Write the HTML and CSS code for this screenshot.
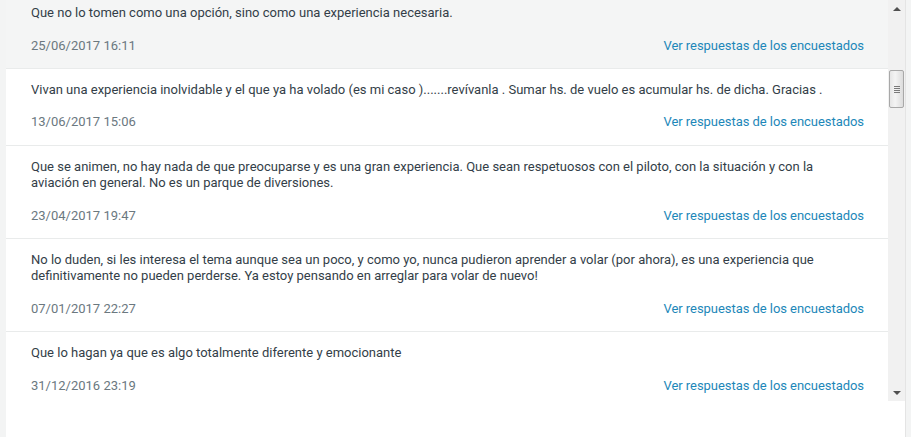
FILE: index.html
```html
<!DOCTYPE html>
<html lang="es">
<head>
<meta charset="UTF-8">
<title>Respuestas</title>
<link rel="stylesheet" href="styles.css">
</head>
<body>
<div class="page">
  <div class="gutter"></div>
  <div class="panel">
    <div class="viewport">
      <ul class="list">
        <li class="item item-hover">
          <p class="answer">Que no lo tomen como una opción, sino como una experiencia necesaria.</p>
          <div class="meta"><span class="date">25/06/2017 16:11</span><a class="link" href="#">Ver respuestas de los encuestados</a></div>
        </li>
        <li class="item">
          <p class="answer">Vivan una experiencia inolvidable y el que ya ha volado (es mi caso ).......revívanla . Sumar hs. de vuelo es acumular hs. de dicha. Gracias .</p>
          <div class="meta"><span class="date">13/06/2017 15:06</span><a class="link" href="#">Ver respuestas de los encuestados</a></div>
        </li>
        <li class="item">
          <p class="answer">Que se animen, no hay nada de que preocuparse y es una gran experiencia. Que sean respetuosos con el piloto, con la situación y con la aviación en general. No es un parque de diversiones.</p>
          <div class="meta"><span class="date">23/04/2017 19:47</span><a class="link" href="#">Ver respuestas de los encuestados</a></div>
        </li>
        <li class="item">
          <p class="answer">No lo duden, si les interesa el tema aunque sea un poco, y como yo, nunca pudieron aprender a volar (por ahora), es una experiencia que definitivamente no pueden perderse. Ya estoy pensando en arreglar para volar de nuevo!</p>
          <div class="meta"><span class="date">07/01/2017 22:27</span><a class="link" href="#">Ver respuestas de los encuestados</a></div>
        </li>
        <li class="item">
          <p class="answer">Que lo hagan ya que es algo totalmente diferente y emocionante</p>
          <div class="meta"><span class="date">31/12/2016 23:19</span><a class="link" href="#">Ver respuestas de los encuestados</a></div>
        </li>
      </ul>
      <div class="scrollbar">
        <span class="arrow arrow-up"></span>
        <div class="track">
          <div class="thumb"><span class="grip"></span></div>
        </div>
        <span class="arrow arrow-down"></span>
      </div>
    </div>
  </div>
  <div class="edge"></div>
</div>
</body>
</html>
```

FILE: styles.css
```css
body {
  margin: 0;
  background: #fff;
  font-family: Roboto, "Liberation Sans", sans-serif;
  font-size: 13px;
  color: #333e48;
}

.page {
  display: flex;
  height: 437px;
  overflow: hidden;
}

.gutter {
  width: 6px;
  flex: 0 0 6px;
  background: #f3f4f4;
}

.panel {
  flex: 1;
}

.viewport {
  display: flex;
  height: 401px;
  overflow: hidden;
}

.list {
  flex: 1;
  list-style: none;
  margin: -8px 0 0;
  padding: 0;
}

.item {
  padding: 13px 24px 13.25px 25px;
  border-bottom: 1px solid #e9ebeb;
}

.item-hover {
  background: #f4f5f5;
}

.answer {
  margin: 0;
  line-height: 16.5px;
}

.meta {
  display: flex;
  justify-content: space-between;
  margin-top: 14px;
  line-height: 19px;
}

.date {
  color: #6b787f;
}

.link {
  color: #1d87b9;
  text-decoration: none;
  letter-spacing: -0.05px;
}

/* barra de desplazamiento dibujada a mano */
.scrollbar {
  width: 17px;
  flex: 0 0 17px;
  display: flex;
  flex-direction: column;
  background: #f1f1f1;
}

.arrow {
  height: 17px;
  display: flex;
  align-items: center;
  justify-content: center;
}

.arrow::before {
  content: "";
  border-left: 4px solid transparent;
  border-right: 4px solid transparent;
}

.arrow-up::before {
  border-bottom: 4px solid #505050;
}

.arrow-down::before {
  border-top: 4px solid #505050;
}

.track {
  flex: 1;
  padding-top: 53px;
}

.thumb {
  height: 36px;
  margin: 0 1px;
  border: 1px solid #a8a8a8;
  border-radius: 2px;
  background: linear-gradient(to right, #e6e6e6, #f4f4f4 40%, #dcdcdc);
  display: flex;
  align-items: center;
  justify-content: center;
}

.grip {
  width: 6px;
  height: 7px;
  background: repeating-linear-gradient(#7a7a7a 0 1px, transparent 1px 2px);
}

.edge {
  width: 6px;
  flex: 0 0 6px;
  background: #f3f4f4;
  border-left: 1px solid #e4e4e4;
  box-sizing: border-box;
}
```
